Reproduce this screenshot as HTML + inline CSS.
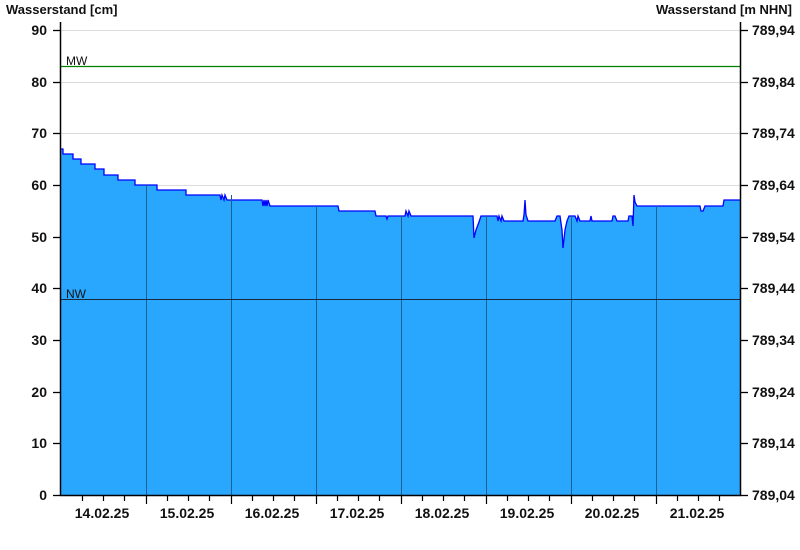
<!DOCTYPE html>
<html><head><meta charset="utf-8"><style>
html,body{margin:0;padding:0;background:#fff;width:800px;height:550px;overflow:hidden}
svg text{font-family:"Liberation Sans",Arial,sans-serif;font-weight:bold;font-size:14px;fill:#111}
svg text.n{font-weight:normal;font-size:12px}
svg text.t{font-size:13px}
</style></head><body>
<svg width="800" height="550" xmlns="http://www.w3.org/2000/svg">
<text x="6" y="14" class="t">Wasserstand [cm]</text>
<text x="792" y="14" class="t" text-anchor="end">Wasserstand [m NHN]</text>
<g stroke="#dcdcdc" stroke-width="1">
<line x1="61" x2="740" y1="30.5" y2="30.5"/><line x1="61" x2="740" y1="82.5" y2="82.5"/>
<line x1="61" x2="740" y1="133.5" y2="133.5"/><line x1="61" x2="740" y1="185.5" y2="185.5"/>
</g>
<polygon fill="#29a7ff" points="61,495 61,149 63,149 63,154 73,154 73,159 81,159 81,164 95,164 95,169 104,169 104,175 118,175 118,180 135,180 135,185 157,185 157,190 186,190 186,195 220,195 221,200 222,195 224,200 225,195 227,200 262,200 263,206 264,200 265,206 266,200 267,206 268,200 270,206 338,206 339,211 375,211 376,216 386,216 387,219 388,216 405,216 406,211 408,216 409,211 411,216 473,216 474,238 476,230 479,222 481,216 497,216 498,221 499,216 501,221 502,216 504,221 523,221 524,215 525,200 526,215 528,221 555,221 557,216 560,216 562,230 563,248 565,230 567,221 569,216 575,216 577,221 578,216 580,221 590,221 591,216 592,221 612,221 613,216 615,216 617,221 628,221 629,216 632,216 633,226 634,195 635,202 637,206 700,206 701,211 703,211 705,206 723,206 724,200 740,200 740,495"/>
<polyline fill="none" stroke="#0000ff" stroke-width="1.3" points="61,149 63,149 63,154 73,154 73,159 81,159 81,164 95,164 95,169 104,169 104,175 118,175 118,180 135,180 135,185 157,185 157,190 186,190 186,195 220,195 221,200 222,195 224,200 225,195 227,200 262,200 263,206 264,200 265,206 266,200 267,206 268,200 270,206 338,206 339,211 375,211 376,216 386,216 387,219 388,216 405,216 406,211 408,216 409,211 411,216 473,216 474,238 476,230 479,222 481,216 497,216 498,221 499,216 501,221 502,216 504,221 523,221 524,215 525,200 526,215 528,221 555,221 557,216 560,216 562,230 563,248 565,230 567,221 569,216 575,216 577,221 578,216 580,221 590,221 591,216 592,221 612,221 613,216 615,216 617,221 628,221 629,216 632,216 633,226 634,195 635,202 637,206 700,206 701,211 703,211 705,206 723,206 724,200 740,200"/>
<g stroke="#1f5f8f" stroke-width="1">
<line x1="146.5" x2="146.5" y1="185" y2="495"/><line x1="231.5" x2="231.5" y1="195" y2="495"/>
<line x1="316.5" x2="316.5" y1="206" y2="495"/><line x1="401.5" x2="401.5" y1="216" y2="495"/>
<line x1="486.5" x2="486.5" y1="216" y2="495"/><line x1="571.5" x2="571.5" y1="216" y2="495"/>
<line x1="656.5" x2="656.5" y1="206" y2="495"/>
</g>
<line x1="61" x2="740" y1="66.5" y2="66.5" stroke="#008000" stroke-width="1.2"/>
<line x1="61" x2="740" y1="299.5" y2="299.5" stroke="#1a2a3a" stroke-width="1"/>
<text x="66" y="65" class="n">MW</text>
<text x="66" y="298" class="n">NW</text>
<g stroke="#000" stroke-width="1.5">
<line x1="60.5" x2="60.5" y1="22" y2="496"/><line x1="740.5" x2="740.5" y1="22" y2="496"/>
<line x1="60" x2="741" y1="495.5" y2="495.5"/>
</g>
<g stroke="#000" stroke-width="1.3">
<line x1="53" x2="60" y1="495.5" y2="495.5"/><line x1="53" x2="60" y1="443.5" y2="443.5"/><line x1="53" x2="60" y1="392.5" y2="392.5"/><line x1="53" x2="60" y1="340.5" y2="340.5"/><line x1="53" x2="60" y1="288.5" y2="288.5"/><line x1="53" x2="60" y1="237.5" y2="237.5"/><line x1="53" x2="60" y1="185.5" y2="185.5"/><line x1="53" x2="60" y1="133.5" y2="133.5"/><line x1="53" x2="60" y1="82.5" y2="82.5"/><line x1="53" x2="60" y1="30.5" y2="30.5"/>
<line x1="741" x2="748" y1="495.5" y2="495.5"/><line x1="741" x2="748" y1="443.5" y2="443.5"/><line x1="741" x2="748" y1="392.5" y2="392.5"/><line x1="741" x2="748" y1="340.5" y2="340.5"/><line x1="741" x2="748" y1="288.5" y2="288.5"/><line x1="741" x2="748" y1="237.5" y2="237.5"/><line x1="741" x2="748" y1="185.5" y2="185.5"/><line x1="741" x2="748" y1="133.5" y2="133.5"/><line x1="741" x2="748" y1="82.5" y2="82.5"/><line x1="741" x2="748" y1="30.5" y2="30.5"/>
</g>
<g stroke="#000" stroke-width="1.2">
<path d="M82.5 496v5M103.5 496v5M124.5 496v5M146.5 496v8M167.5 496v5M188.5 496v5M209.5 496v5M231.5 496v8M252.5 496v5M273.5 496v5M294.5 496v5M316.5 496v8M337.5 496v5M358.5 496v5M379.5 496v5M401.5 496v8M422.5 496v5M443.5 496v5M464.5 496v5M486.5 496v8M507.5 496v5M528.5 496v5M549.5 496v5M571.5 496v8M592.5 496v5M613.5 496v5M634.5 496v5M656.5 496v8M677.5 496v5M698.5 496v5M719.5 496v5"/>
</g>
<g text-anchor="end">
<text x="47" y="500">0</text><text x="47" y="448">10</text><text x="47" y="397">20</text><text x="47" y="345">30</text><text x="47" y="293">40</text><text x="47" y="242">50</text><text x="47" y="190">60</text><text x="47" y="138">70</text><text x="47" y="87">80</text><text x="47" y="35">90</text>
</g>
<g>
<text x="752" y="500">789,04</text><text x="752" y="448">789,14</text><text x="752" y="397">789,24</text><text x="752" y="345">789,34</text><text x="752" y="293">789,44</text><text x="752" y="242">789,54</text><text x="752" y="190">789,64</text><text x="752" y="138">789,74</text><text x="752" y="87">789,84</text><text x="752" y="35">789,94</text>
</g>
<g text-anchor="middle">
<text x="102" y="518">14.02.25</text><text x="187" y="518">15.02.25</text><text x="272" y="518">16.02.25</text><text x="357" y="518">17.02.25</text><text x="442" y="518">18.02.25</text><text x="527" y="518">19.02.25</text><text x="612" y="518">20.02.25</text><text x="697" y="518">21.02.25</text>
</g>
</svg>
</body></html>
